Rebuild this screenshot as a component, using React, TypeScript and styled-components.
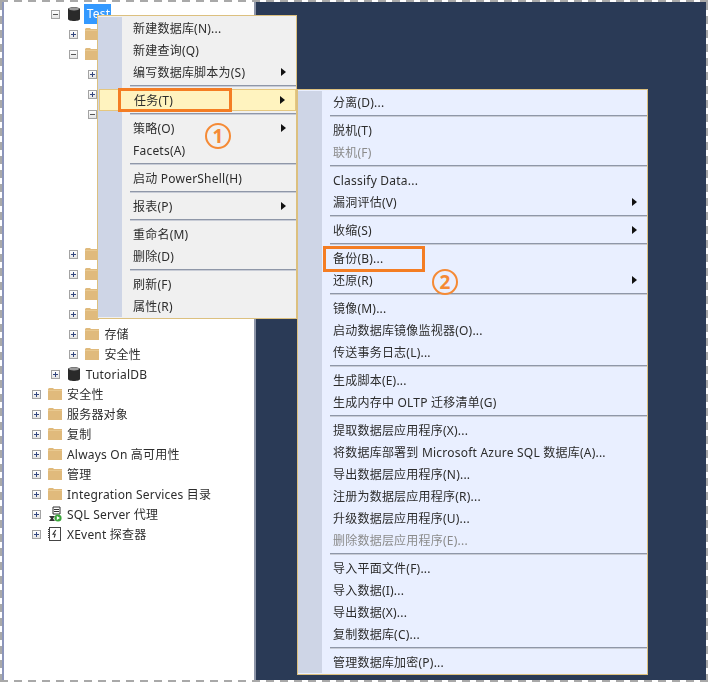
import React from "react";
import styled, { createGlobalStyle } from "styled-components";

const GlobalStyle = createGlobalStyle`
  html, body {
    margin: 0;
    padding: 0;
    background: #ffffff;
  }
  * {
    box-sizing: border-box;
  }
`;

type TreeRow = {
  level: number;
  label?: string;
  icon?: "folder" | "db" | "agent" | "xevent" | "none";
  open?: boolean;
  selected?: boolean;
  blank?: boolean;
};

const treeRows: TreeRow[] = [
  { level: 1, label: "Test", icon: "db", open: true, selected: true },
  { level: 2, icon: "folder" },
  { level: 2, icon: "folder", open: true },
  { level: 3, icon: "folder" },
  { level: 3, icon: "folder" },
  { level: 3, icon: "folder", open: true },
  { level: 0, blank: true },
  { level: 0, blank: true },
  { level: 0, blank: true },
  { level: 0, blank: true },
  { level: 0, blank: true },
  { level: 0, blank: true },
  { level: 2, icon: "folder" },
  { level: 2, icon: "folder" },
  { level: 2, icon: "folder" },
  { level: 2, icon: "folder" },
  { level: 2, label: "存储", icon: "folder" },
  { level: 2, label: "安全性", icon: "folder" },
  { level: 1, label: "TutorialDB", icon: "db" },
  { level: 0, label: "安全性", icon: "folder" },
  { level: 0, label: "服务器对象", icon: "folder" },
  { level: 0, label: "复制", icon: "folder" },
  { level: 0, label: "Always On 高可用性", icon: "folder" },
  { level: 0, label: "管理", icon: "folder" },
  { level: 0, label: "Integration Services 目录", icon: "folder" },
  { level: 0, label: "SQL Server 代理", icon: "agent" },
  { level: 0, label: "XEvent 探查器", icon: "xevent" },
];

type Entry = {
  label?: string;
  arrow?: boolean;
  disabled?: boolean;
  active?: boolean;
  sep?: boolean;
};

const S: Entry = { sep: true };

const mainMenu: Entry[] = [
  { label: "新建数据库(N)..." },
  { label: "新建查询(Q)" },
  { label: "编写数据库脚本为(S)", arrow: true },
  S,
  { label: "任务(T)", arrow: true, active: true },
  S,
  { label: "策略(O)", arrow: true },
  { label: "Facets(A)" },
  S,
  { label: "启动 PowerShell(H)" },
  S,
  { label: "报表(P)", arrow: true },
  S,
  { label: "重命名(M)" },
  { label: "删除(D)" },
  S,
  { label: "刷新(F)" },
  { label: "属性(R)" },
];

const taskMenu: Entry[] = [
  { label: "分离(D)..." },
  S,
  { label: "脱机(T)" },
  { label: "联机(F)", disabled: true },
  S,
  { label: "Classify Data..." },
  { label: "漏洞评估(V)", arrow: true },
  S,
  { label: "收缩(S)", arrow: true },
  S,
  { label: "备份(B)..." },
  { label: "还原(R)", arrow: true },
  S,
  { label: "镜像(M)..." },
  { label: "启动数据库镜像监视器(O)..." },
  { label: "传送事务日志(L)..." },
  S,
  { label: "生成脚本(E)..." },
  { label: "生成内存中 OLTP 迁移清单(G)" },
  S,
  { label: "提取数据层应用程序(X)..." },
  { label: "将数据库部署到 Microsoft Azure SQL 数据库(A)..." },
  { label: "导出数据层应用程序(N)..." },
  { label: "注册为数据层应用程序(R)..." },
  { label: "升级数据层应用程序(U)..." },
  { label: "删除数据层应用程序(E)...", disabled: true },
  S,
  { label: "导入平面文件(F)..." },
  { label: "导入数据(I)..." },
  { label: "导出数据(X)..." },
  { label: "复制数据库(C)..." },
  S,
  { label: "管理数据库加密(P)..." },
];

function FolderIcon() {
  return (
    <IconSvg width="14" height="14" viewBox="0 0 14 14">
      <path d="M0 2 L1 1 H5 L6 2 H14 V13 H0 Z" fill="#e0ba7c" />
      <path d="M0 3.5 H14" stroke="#e8c88f" strokeWidth="1" />
    </IconSvg>
  );
}

function DbIcon() {
  return (
    <IconSvg width="14" height="16" viewBox="0 0 14 16">
      <path
        d="M1 3 C1 0.6 13 0.6 13 3 V13 C13 15.6 1 15.6 1 13 Z"
        fill="#2a2a2a"
      />
      <ellipse cx="7" cy="3" rx="5" ry="1.4" fill="#9a9a9a" />
    </IconSvg>
  );
}

function AgentIcon() {
  return (
    <IconSvg width="14" height="16" viewBox="0 0 14 16">
      <path d="M5 1 H12 V8 H5 Z" fill="#ffffff" stroke="#333" strokeWidth="1" />
      <path d="M6 3.5 H11 M6 5.5 H11" stroke="#333" strokeWidth="1" />
      <path d="M1 10 H7 L5 12.5 L7 15 H1 L3 12.5 Z" fill="#333" />
      <circle cx="10" cy="12" r="3.6" fill="#3aa63a" />
      <path d="M8.8 10 L12 12 L8.8 14 Z" fill="#ffffff" />
    </IconSvg>
  );
}

function XEventIcon() {
  return (
    <IconSvg width="14" height="14" viewBox="0 0 14 14">
      <rect x="1.5" y="0.5" width="11" height="13" fill="#ffffff" stroke="#444" />
      <path d="M0.5 2 V12" stroke="#444" strokeDasharray="1 1" />
      <path d="M7.8 3 L5 7.2 H7.2 L6.2 10.5" fill="none" stroke="#333" strokeWidth="1.1" />
    </IconSvg>
  );
}

function RowIcon({ icon }: { icon?: TreeRow["icon"] }) {
  if (icon === "db") return <DbIcon />;
  if (icon === "agent") return <AgentIcon />;
  if (icon === "xevent") return <XEventIcon />;
  return <FolderIcon />;
}

function MenuList({ items }: { items: Entry[] }) {
  return (
    <MenuBody>
      {items.map((item, i) =>
        item.sep ? (
          <Separator key={i} />
        ) : (
          <MenuItem key={i} $active={item.active} $disabled={item.disabled}>
            <ItemLabel>{item.label}</ItemLabel>
            {item.arrow && <Arrow />}
          </MenuItem>
        )
      )}
    </MenuBody>
  );
}

export default function App(): JSX.Element {
  return (
    <>
      <GlobalStyle />
      <Frame>
        <Split>
          <TreePane>
            {treeRows.map((row, i) => (
              <Row key={i} $level={row.level}>
                {!row.blank && (
                  <>
                    <Expander $open={row.open} />
                    <RowIcon icon={row.icon} />
                    {row.label && <RowLabel $selected={row.selected}>{row.label}</RowLabel>}
                  </>
                )}
              </Row>
            ))}
          </TreePane>
          <Backdrop />
        </Split>

        <MainMenu>
          <Gutter />
          <MenuList items={mainMenu} />
        </MainMenu>
        <TaskMenu>
          <Gutter />
          <MenuList items={taskMenu} />
        </TaskMenu>

        <CalloutBoxOne />
        <CalloutBoxTwo />
        <StepOne>1</StepOne>
        <StepTwo>2</StepTwo>
      </Frame>
    </>
  );
}

const Frame = styled.div`
  position: relative;
  width: 708px;
  height: 682px;
  padding: 2px;
  overflow: hidden;
  font-family: "Noto Sans", "Noto Sans CJK SC", sans-serif;
  font-size: 12px;
  color: #2c2c2c;
  background-color: #ffffff;
  background-image:
    repeating-linear-gradient(90deg, #a9a9a9 0 8px, #ffffff 8px 14px),
    repeating-linear-gradient(90deg, #a9a9a9 0 8px, #ffffff 8px 14px),
    repeating-linear-gradient(0deg, #a9a9a9 0 8px, #ffffff 8px 14px),
    repeating-linear-gradient(0deg, #a9a9a9 0 8px, #ffffff 8px 14px);
  background-size: 100% 2px, 100% 2px, 2px 100%, 2px 100%;
  background-position: 0 0, 0 100%, 0 0, 100% 0;
  background-repeat: no-repeat;
`;

const Split = styled.div`
  display: flex;
  height: 100%;
`;

const TreePane = styled.div`
  width: 254px;
  height: 100%;
  padding-top: 2px;
  background: #ffffff;
  border-left: 2px solid #8c96bb;
  border-right: 2px solid #8d95a8;
  flex-shrink: 0;
`;

const Backdrop = styled.div`
  flex: 1;
  background: #2a3a56;
`;

const Row = styled.div<{ $level: number }>`
  display: flex;
  align-items: center;
  height: 20px;
  padding-left: ${(p) => 28 + p.$level * 18.7}px;
  white-space: nowrap;
`;

const Expander = styled.span<{ $open?: boolean }>`
  position: relative;
  width: 9px;
  height: 9px;
  margin-right: 7px;
  flex-shrink: 0;
  border: 1px solid #a3a3a3;
  background: linear-gradient(#ffffff, #e4e4e4);

  &::before {
    content: "";
    position: absolute;
    left: 1px;
    top: 3px;
    width: 5px;
    height: 1px;
    background: ${(p) => (p.$open ? "#555" : "#33467e")};
  }

  &::after {
    content: "";
    display: ${(p) => (p.$open ? "none" : "block")};
    position: absolute;
    left: 3px;
    top: 1px;
    width: 1px;
    height: 5px;
    background: #33467e;
  }
`;

const IconSvg = styled.svg`
  flex-shrink: 0;
  display: block;
`;

const RowLabel = styled.span<{ $selected?: boolean }>`
  margin-left: ${(p) => (p.$selected ? 3 : 5)}px;
  padding: ${(p) => (p.$selected ? "0 1px 0 3px" : "0")};
  height: ${(p) => (p.$selected ? "20px" : "auto")};
  line-height: ${(p) => (p.$selected ? "20px" : "normal")};
  color: ${(p) => (p.$selected ? "#ffffff" : "inherit")};
  background: ${(p) => (p.$selected ? "#3399ff" : "transparent")};
  letter-spacing: 0.2px;
  filter: blur(0.3px);
`;

const Menu = styled.div`
  position: absolute;
  display: flex;
  padding: 1px 0;
  border: 1px solid #dcc07f;
`;

const MainMenu = styled(Menu)`
  left: 97px;
  top: 15px;
  width: 200px;
  height: 304px;
  background: #f0f0f0;
`;

const TaskMenu = styled(Menu)`
  left: 297px;
  top: 89px;
  width: 351px;
  height: 586px;
  background: #e9efff;
`;

const Gutter = styled.div`
  width: 24px;
  flex-shrink: 0;
  background: #ced5e6;
`;

const MenuBody = styled.div`
  flex: 1;
  min-width: 0;
`;

const MenuItem = styled.div<{ $active?: boolean; $disabled?: boolean }>`
  display: flex;
  align-items: center;
  justify-content: space-between;
  height: 22px;
  padding: 0 10px 0 11px;
  color: ${(p) => (p.$disabled ? "#8b8b8b" : "inherit")};
  ${(p) =>
    p.$active &&
    `
    position: relative;
    margin-left: -23px;
    padding-left: 34px;
    background: #fff3bf;
    border: 1px solid #e5c77f;
  `}
`;

const ItemLabel = styled.span`
  white-space: nowrap;
  letter-spacing: 0.22px;
  filter: blur(0.3px);
`;

const Arrow = styled.span`
  width: 0;
  height: 0;
  border-left: 5px solid #111111;
  border-top: 4px solid transparent;
  border-bottom: 4px solid transparent;
`;

const Separator = styled.div`
  height: 6px;
  margin-left: 8px;
  padding-top: 2px;

  &::before {
    content: "";
    display: block;
    height: 2px;
    background: linear-gradient(#8f97a8 50%, #c8ccd6 50%);
  }
`;

const CalloutBox = styled.div`
  position: absolute;
  border: 3px solid #f47d23;
`;

const CalloutBoxOne = styled(CalloutBox)`
  left: 118px;
  top: 88px;
  width: 114px;
  height: 24px;
`;

const CalloutBoxTwo = styled(CalloutBox)`
  left: 323px;
  top: 246px;
  width: 102px;
  height: 26px;
`;

const Step = styled.div`
  position: absolute;
  display: flex;
  align-items: center;
  justify-content: center;
  width: 26px;
  height: 26px;
  border: 2px solid #f58a35;
  border-radius: 50%;
  color: #f58a35;
  font-size: 19px;
  font-weight: 700;
  line-height: 1;
`;

const StepOne = styled(Step)`
  left: 205px;
  top: 123px;
`;

const StepTwo = styled(Step)`
  left: 432px;
  top: 269px;
`;
